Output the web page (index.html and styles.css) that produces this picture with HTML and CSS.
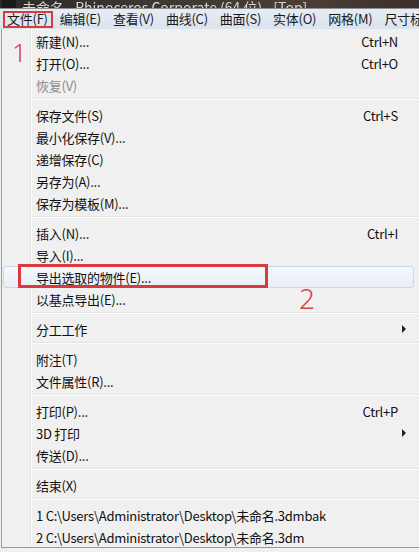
FILE: index.html
```html
<!DOCTYPE html>
<html lang="zh-CN">
<head>
<meta charset="utf-8">
<link rel="stylesheet" href="styles.css">
</head>
<body>
<div class="titlebar">
  <span class="app-icon"></span>
  <span class="title-text">未命名 - Rhinoceros Corporate (64 位) - [Top]</span>
</div>
<div class="menubar">
  <span class="mb-item first">文件(F)<span class="mark-box"></span><span class="mark-num one">1</span></span>
  <span class="mb-item">编辑(E)</span>
  <span class="mb-item">查看(V)</span>
  <span class="mb-item">曲线(C)</span>
  <span class="mb-item">曲面(S)</span>
  <span class="mb-item">实体(O)</span>
  <span class="mb-item">网格(M)</span>
  <span class="mb-item">尺寸标注</span>
</div>
<div class="dropdown">
  <div class="item"><span class="label">新建(N)...</span><span class="key">Ctrl+N</span></div>
  <div class="item"><span class="label">打开(O)...</span><span class="key">Ctrl+O</span></div>
  <div class="item disabled"><span class="label">恢复(V)</span></div>
  <div class="sep"></div>
  <div class="item"><span class="label">保存文件(S)</span><span class="key">Ctrl+S</span></div>
  <div class="item"><span class="label">最小化保存(V)...</span></div>
  <div class="item"><span class="label">递增保存(C)</span></div>
  <div class="item"><span class="label">另存为(A)...</span></div>
  <div class="item"><span class="label">保存为模板(M)...</span></div>
  <div class="sep"></div>
  <div class="item"><span class="label">插入(N)...</span><span class="key">Ctrl+I</span></div>
  <div class="item"><span class="label">导入(I)...</span></div>
  <div class="item hl"><span class="label">导出选取的物件(E)...</span><span class="mark-box wide"></span><span class="mark-num two">2</span></div>
  <div class="item"><span class="label">以基点导出(E)...</span></div>
  <div class="sep"></div>
  <div class="item"><span class="label">分工工作</span><span class="arrow"></span></div>
  <div class="sep"></div>
  <div class="item"><span class="label">附注(T)</span></div>
  <div class="item"><span class="label">文件属性(R)...</span></div>
  <div class="sep"></div>
  <div class="item"><span class="label">打印(P)...</span><span class="key">Ctrl+P</span></div>
  <div class="item"><span class="label">3D 打印</span><span class="arrow"></span></div>
  <div class="item"><span class="label">传送(D)...</span></div>
  <div class="sep"></div>
  <div class="item"><span class="label">结束(X)</span></div>
  <div class="sep"></div>
  <div class="item"><span class="label">1 C:\Users\Administrator\Desktop\未命名.3dmbak</span></div>
  <div class="item"><span class="label">2 C:\Users\Administrator\Desktop\未命名.3dm</span></div>
</div>
</body>
</html>
```
FILE: styles.css
```css
html, body {
  margin: 0;
  padding: 0;
  width: 419px;
  height: 552px;
  overflow: hidden;
  background: #f0f0f0;
  font-family: "Noto Sans CJK SC", "Noto Sans", sans-serif;
  font-size: 13px;
  color: #111111;
}

.titlebar {
  height: 8px;
  overflow: hidden;
  display: flex;
  align-items: flex-end;
  background: linear-gradient(to right, #2c2a28 0%, #3d3934 40%, #4a3f36 75%, #3a2f2a 100%);
  border-bottom: 1px solid #8c8e92;
}

.app-icon {
  width: 14px;
  height: 8px;
  margin-left: 2px;
  background: #1a1a1a;
  flex: none;
}

.title-text {
  margin-left: 6px;
  margin-bottom: -7px;
  line-height: 16px;
  font-size: 14px;
  color: #d8d4cf;
  white-space: nowrap;
  filter: blur(0.5px);
}

.menubar {
  height: 20px;
  display: flex;
  align-items: center;
  padding-left: 1px;
  background: linear-gradient(to bottom, #e6ecf4, #dbe3ee);
  white-space: nowrap;
  letter-spacing: -0.25px;
}

.mb-item {
  position: relative;
  padding: 0 6px;
  line-height: 20px;
  color: #1a1a1a;
}

.mark-box {
  position: absolute;
  left: 2px;
  top: 2px;
  width: 50px;
  height: 17px;
  box-sizing: border-box;
  border: 2px solid #d9393f;
  pointer-events: none;
}

.mark-num {
  position: absolute;
  color: #d9404a;
  font-family: "Noto Sans", "DejaVu Sans", sans-serif;
  font-weight: 300;
  line-height: 1;
  letter-spacing: 0;
}

.mark-num.one {
  left: 11px;
  top: 30px;
  font-size: 26px;
}

.mark-num.two {
  left: 295px;
  top: 17px;
  font-size: 28px;
}

.dropdown {
  margin-left: 1px;
  border-left: 1px solid #9a9a9a;
  border-bottom: 1px solid #9a9a9a;
  padding-top: 1px;
  height: 517px;
  letter-spacing: -0.25px;
  background:
    linear-gradient(to right, transparent 28px, #e2e3e3 28px, #e2e3e3 29px, #ffffff 29px, #ffffff 30px, transparent 30px),
    #f0f0f0;
}

.item {
  position: relative;
  height: 22px;
  display: flex;
  align-items: center;
  padding-left: 33px;
  margin-left: 1px;
  white-space: nowrap;
}

.item.disabled {
  color: #8d8d8d;
}

.item .label {
  flex: 1;
}

.item .key {
  margin-right: 21px;
}

.item .arrow {
  width: 0;
  height: 0;
  border-top: 4px solid transparent;
  border-bottom: 4px solid transparent;
  border-left: 4px solid #222;
  margin-right: 13px;
}

.item.hl {
  margin-right: 5px;
  padding-left: 32px;
  border: 1px solid #c9d8ea;
  border-radius: 3px;
  height: 20px;
  background: linear-gradient(to bottom, #f4f7fb, #e9eff7);
}

.mark-box.wide {
  left: 14px;
  top: -3px;
  width: 250px;
  height: 24px;
  border-width: 3px;
}

.sep {
  height: 8px;
  margin-left: 30px;
  background: linear-gradient(to bottom, transparent 2px, #e2e3e3 2px, #e2e3e3 3px, #ffffff 3px, #ffffff 4px, transparent 4px);
}
```
